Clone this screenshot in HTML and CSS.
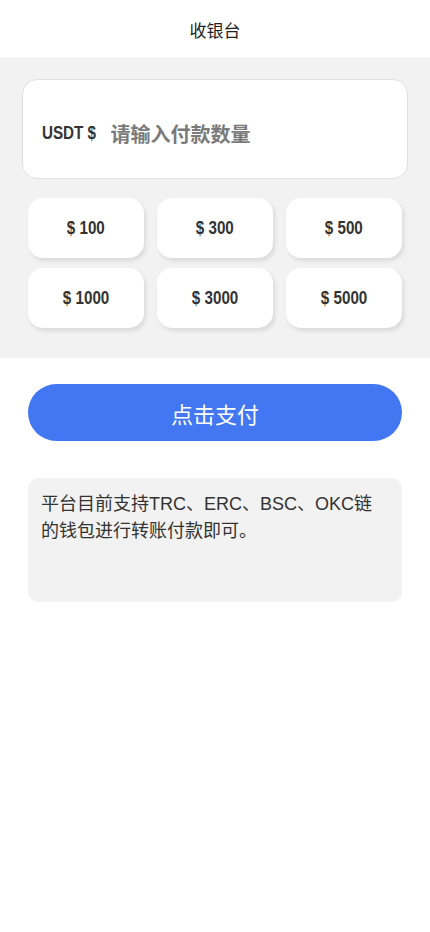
FILE: index.html
```html
<!DOCTYPE html>
<html lang="zh-CN">
<head>
    <meta charset="UTF-8">
    <meta name="viewport" content="width=device-width, initial-scale=1.0">
    <title>收银台</title>
    <link rel="stylesheet" href="styles.css">
</head>
<body>
    <div class="header">收银台</div>
    <div class="panel">
        <div class="amount-box">
            <span class="unit">USDT $</span>
            <input class="amount-input" type="text" placeholder="请输入付款数量">
        </div>
        <div class="presets">
            <div class="preset"><span>$ 100</span></div>
            <div class="preset"><span>$ 300</span></div>
            <div class="preset"><span>$ 500</span></div>
            <div class="preset"><span>$ 1000</span></div>
            <div class="preset"><span>$ 3000</span></div>
            <div class="preset"><span>$ 5000</span></div>
        </div>
    </div>
    <div class="content">
        <button class="pay-btn">点击支付</button>
        <div class="notice">平台目前支持TRC、ERC、BSC、OKC链的钱包进行转账付款即可。</div>
    </div>
</body>
</html>
```

FILE: styles.css
```css
body {
    margin: 0;
    background: #fff;
    font-family: "Noto Sans CJK SC", "Noto Sans", sans-serif;
    color: #333;
}
.header {
    height: 58px;
    line-height: 60px;
    text-align: center;
    font-size: 17px;
    color: #222;
    border-bottom: 1px solid #ececec;
}
.panel {
    background: #f2f2f2;
    padding: 20px 22px 30px 22px;
}
.amount-box {
    height: 100px;
    background: #fff;
    border: 1px solid #e0e0e0;
    border-radius: 15px;
    display: flex;
    align-items: center;
    padding: 8px 0 0 19px;
    box-sizing: border-box;
}
/* narrow bold digits: arial bold squeezed */
.unit {
    flex: none;
    display: inline-block;
    white-space: nowrap;
    font-family: "Liberation Sans", Arial, sans-serif;
    font-weight: bold;
    font-size: 19px;
    color: #333;
    transform: scaleX(0.8);
    transform-origin: left center;
    margin-right: 1px;
}
.amount-input {
    flex: 1;
    min-width: 0;
    border: none;
    outline: none;
    font-family: "Noto Sans CJK SC", sans-serif;
    font-weight: bold;
    font-size: 20px;
    color: #333;
    background: transparent;
    padding: 0;
}
.amount-input::placeholder {
    color: #7a7a7a;
}
.presets {
    display: grid;
    grid-template-columns: repeat(3, 116px);
    column-gap: 13px;
    row-gap: 10px;
    margin: 19px 0 0 6px;
}
.preset {
    height: 60px;
    background: #fff;
    border-radius: 15px;
    box-shadow: 2px 3px 4px rgba(0, 0, 0, 0.1);
    display: flex;
    align-items: center;
    justify-content: center;
    font-family: "Liberation Sans", Arial, sans-serif;
    font-weight: bold;
    font-size: 19px;
    color: #333;
}
.preset span {
    display: inline-block;
    white-space: nowrap;
    transform: scaleX(0.8);
}
.content {
    padding: 26px 28px;
}
.pay-btn {
    display: block;
    width: 100%;
    height: 57px;
    border: none;
    border-radius: 29px;
    background: #4277f1;
    color: #fff;
    font-family: "Noto Sans CJK SC", sans-serif;
    font-size: 22px;
}
.notice {
    margin-top: 37px;
    height: 124px;
    box-sizing: border-box;
    background: #f2f2f2;
    border-radius: 11px;
    padding: 13px 16px 11px 13px;
    font-family: "Liberation Sans", "Noto Sans CJK SC", sans-serif;
    font-size: 18px;
    line-height: 27px;
    color: #333;
}
```
